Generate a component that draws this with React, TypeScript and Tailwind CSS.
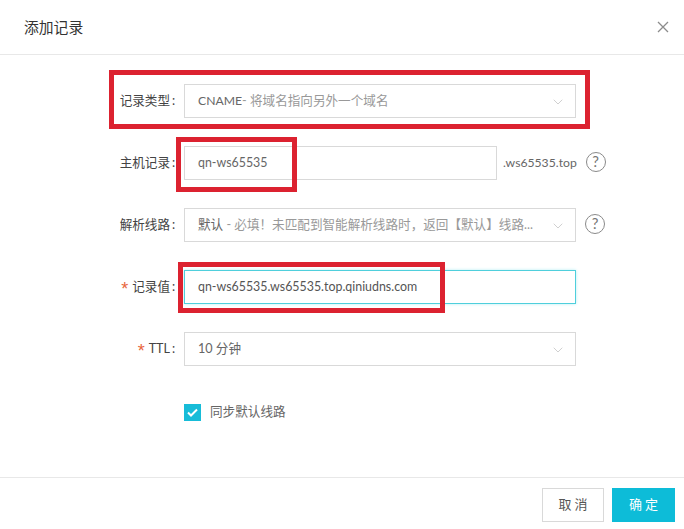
import React from 'react';
import { ChevronDown } from 'lucide-react';

const font = "font-['Lato','Noto_Sans_CJK_SC',sans-serif]";

const Label = ({ text, required }: { text: string; required?: boolean }) => (
  <div className="w-[178px] shrink-0 flex justify-end items-center pt-[1px] text-[12.6px] text-[#444]">
    {required && <span className="font-['Liberation_Sans'] text-[#e8663c] mr-[4px] mt-[2px] text-[18px] leading-none">*</span>}
    <span>{text}</span>
    <span className="ml-[2px] w-[6px]">:</span>
  </div>
);

const Help = () => (
  <div className="ml-[9px] -mt-[3px] w-[20px] h-[20px] rounded-full border-[1.5px] border-[#8a8a8a] text-[#777] text-[15px] leading-[17px] text-center">?</div>
);

const Select = ({ children }: { children: React.ReactNode }) => (
  <div className="ml-[6px] w-[392px] h-full border border-[#d9d9d9] flex items-center justify-between pl-[13px] pr-[9px] pt-[1px] text-[12.6px] text-[#666]">
    <div className="whitespace-nowrap">{children}</div>
    <ChevronDown className="w-[16px] h-[16px] text-[#c4c4c4] shrink-0" strokeWidth={1.2} />
  </div>
);

const App = () => {
  return (
    <div className={`relative w-[684px] h-[529px] bg-white overflow-hidden ${font}`}>
      <div className="h-[55px] border-b border-[#e8e8e8] flex items-center justify-between pl-[24px] pr-[15px]">
        <h1 className="text-[14.8px] text-[#333]">添加记录</h1>
        <svg width="12" height="12" viewBox="0 0 12 12" className="text-[#8c8c8c]">
          <path d="M1 1 L11 11 M11 1 L1 11" stroke="currentColor" strokeWidth="1.3" fill="none" />
        </svg>
      </div>

      <div className="h-[422px] pt-[29px] flex flex-col gap-[28px]">
        <div className="flex h-[34px]">
          <Label text="记录类型" />
          <Select>
            <span className="text-[12.2px]">CNAME</span><span className="text-[#999]">- 将域名指向另外一个域名</span>
          </Select>
        </div>
        <div className="flex h-[34px] items-center">
          <Label text="主机记录" />
          <div className="ml-[6px] w-[313px] h-full border border-[#d9d9d9] flex items-center pl-[13px] pt-[1px] text-[12.4px] text-[#666]">qn-ws65535</div>
          <span className="ml-[6px] text-[12.2px] text-[#666]">.ws65535.top</span>
          <Help />
        </div>
        <div className="flex h-[34px] items-center">
          <Label text="解析线路" />
          <Select>
            默认<span className="text-[#999]"> - 必填！未匹配到智能解析线路时，返回【默认】线路...</span>
          </Select>
          <Help />
        </div>
        <div className="flex h-[34px]">
          <Label text="记录值" required />
          <div className="ml-[6px] w-[392px] h-full border border-[#4fcfdc] shadow-[0_0_3px_#b5eef4] flex items-center pl-[13px] pt-[1px] text-[12.4px] text-[#555]">qn-ws65535.ws65535.top.qiniudns.com</div>
        </div>
        <div className="flex h-[34px]">
          <Label text="TTL" required />
          <Select>10 分钟</Select>
        </div>
        <div className="flex items-center pl-[184px] mt-[9px]">
          <div className="w-[17px] h-[17px] bg-[#17bcd8] flex items-center justify-center">
            <svg width="11" height="9" viewBox="0 0 11 9">
              <path d="M1 4.5 L4 7.5 L10 1.5" stroke="white" strokeWidth="2" fill="none" />
            </svg>
          </div>
          <span className="ml-[9px] text-[12.6px] text-[#666]">同步默认线路</span>
        </div>
      </div>

      <div className="border-t border-[#e8e8e8] flex justify-end gap-[8px] pt-[10px] pr-[9px]">
        <button className="w-[62px] h-[34px] border border-[#d9d9d9] bg-white text-[13px] text-[#555] tracking-[3px] pl-[3px]">取消</button>
        <button className="w-[63px] h-[34px] bg-[#0dbcd8] text-[13px] text-white tracking-[3px] pl-[3px]">确定</button>
      </div>

      {/* red annotation boxes drawn on top of the screenshot */}
      <div className="absolute left-[109px] top-[70px] w-[481px] h-[59px] border-[5px] border-[#dc2230]" />
      <div className="absolute left-[176px] top-[137px] w-[121px] h-[55px] border-[5px] border-[#dc2230]" />
      <div className="absolute left-[178px] top-[262px] w-[267px] h-[51px] border-[5px] border-[#dc2230]" />
    </div>
  );
};

export default App;
